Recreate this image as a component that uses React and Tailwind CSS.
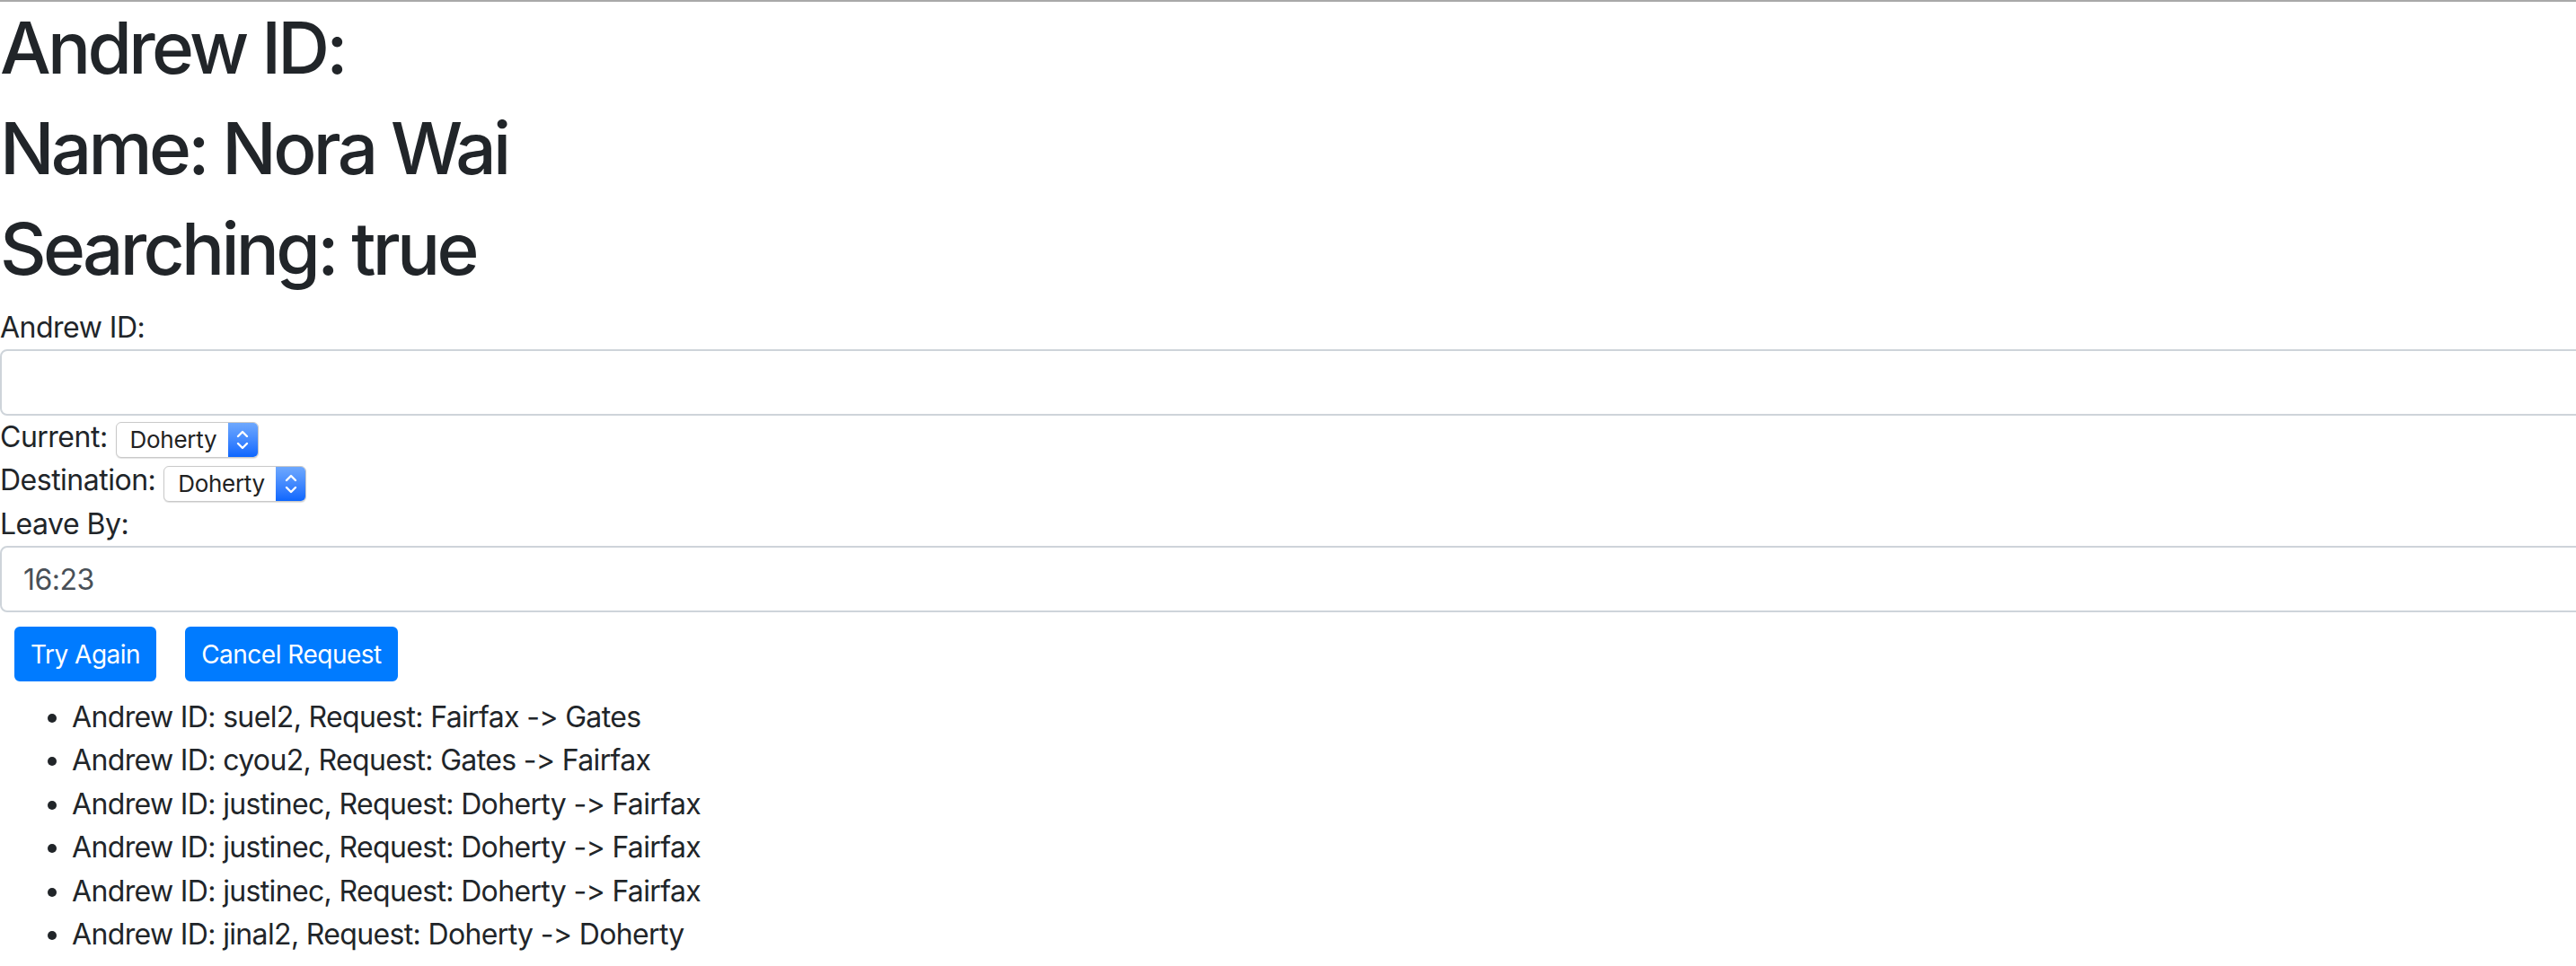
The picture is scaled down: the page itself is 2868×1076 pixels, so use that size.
import React from "react";

const requests = [
  { id: "suel2", from: "Fairfax", to: "Gates" },
  { id: "cyou2", from: "Gates", to: "Fairfax" },
  { id: "justinec", from: "Doherty", to: "Fairfax" },
  { id: "justinec", from: "Doherty", to: "Fairfax" },
  { id: "justinec", from: "Doherty", to: "Fairfax" },
  { id: "jinal2", from: "Doherty", to: "Doherty" },
];

function MacSelect({ value }) {
  return (
    <span className="inline-flex h-[40px] w-[159px] items-stretch overflow-hidden rounded-[6px] border border-[#c9c9c9] bg-white shadow-[0_1px_1px_rgba(0,0,0,0.12)]">
      <span className="flex flex-1 items-center pl-[15px] text-[26px] leading-none tracking-[-0.3px] text-[#222]">
        {value}
      </span>
      <span className="flex w-[33px] items-center justify-center bg-linear-to-b from-[#6ea8fd] to-[#0b66fe]">
        <svg width="14" height="26" viewBox="0 0 14 26" fill="none">
          <path
            d="M2 9 L7 4 L12 9"
            stroke="white"
            strokeWidth="2.4"
            strokeLinecap="round"
            strokeLinejoin="round"
          />
          <path
            d="M2 17 L7 22 L12 17"
            stroke="white"
            strokeWidth="2.4"
            strokeLinecap="round"
            strokeLinejoin="round"
          />
        </svg>
      </span>
    </span>
  );
}

export default function App() {
  return (
    <div className="min-h-screen w-full overflow-hidden border-t-2 border-[#a9a9a9] bg-white pt-[3px] font-['Inter','Liberation_Sans',Arial,sans-serif] tracking-[-0.5px] text-[#212529] [font-feature-settings:'calt'_0]">
      <h1 className="mb-4 text-[80px] leading-[96px] font-medium tracking-[-3.7px]">Andrew ID:</h1>
      <h1 className="mb-4 text-[80px] leading-[96px] font-medium tracking-[-3.7px]">Name: Nora Wai</h1>
      <h1 className="mb-4 text-[80px] leading-[96px] font-medium tracking-[-3.7px]">Searching: true</h1>

      <form onSubmit={(e) => e.preventDefault()}>
        <label className="block text-[32px] leading-[48px]">Andrew ID:</label>
        <input
          type="text"
          className="block h-[74px] w-[calc(100%+40px)] rounded-[8px] border-2 border-[#ced4da] bg-white px-6 text-[32px] text-[#495057] outline-none"
        />

        <div className="flex h-[48px] items-start text-[32px] leading-[48px]">
          <span>Current:</span>
          <span className="ml-[9px] mt-[7px] flex">
            <MacSelect value="Doherty" />
          </span>
        </div>
        <div className="flex h-[49px] items-start text-[32px] leading-[48px]">
          <span>Destination:</span>
          <span className="ml-[9px] mt-[8px] flex">
            <MacSelect value="Doherty" />
          </span>
        </div>

        <label className="block text-[32px] leading-[48px]">Leave By:</label>
        <input
          type="text"
          defaultValue="16:23"
          className="block h-[74px] w-[calc(100%+40px)] rounded-[8px] border-2 border-[#ced4da] bg-white px-6 text-[32px] text-[#495057] outline-none"
        />

        <div className="flex">
          <button
            type="button"
            className="m-4 h-[61px] rounded-[6px] border-2 border-[#007bff] bg-[#007bff] px-4 text-[28px] leading-[42px] text-white"
          >
            Try Again
          </button>
          <button
            type="button"
            className="m-4 h-[61px] rounded-[6px] border-2 border-[#007bff] bg-[#007bff] px-4 text-[28px] leading-[42px] text-white"
          >
            Cancel Request
          </button>
        </div>
      </form>

      <ul className="mb-8 list-disc pl-[80px] text-[32px] leading-[48.4px] tracking-[-0.65px]">
        {requests.map((r, i) => (
          <li key={i}>
            Andrew ID: {r.id}, Request: {r.from} -&gt; {r.to}
          </li>
        ))}
      </ul>
    </div>
  );
}
